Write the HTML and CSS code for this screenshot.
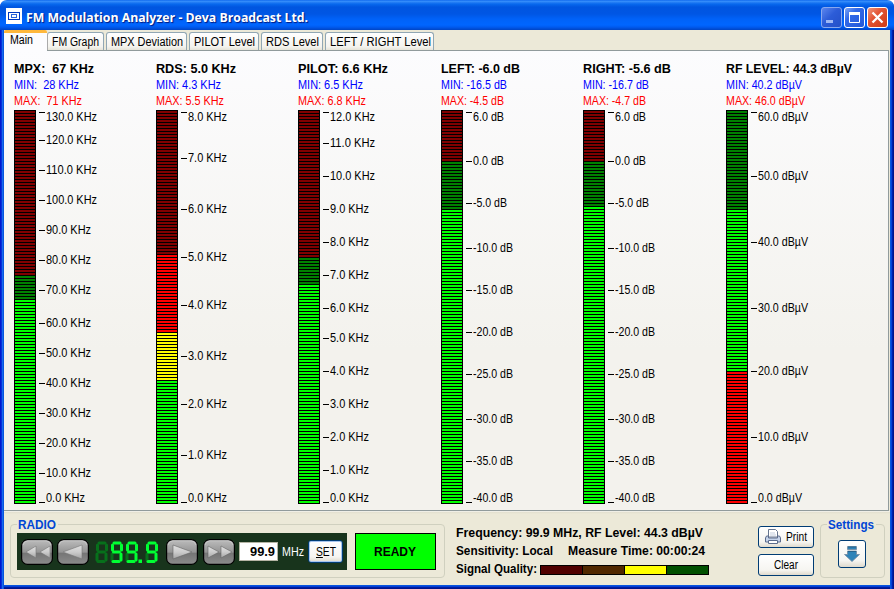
FILE: index.html
```html
<!DOCTYPE html>
<html lang="en">
<head>
<meta charset="utf-8">
<title>FM Modulation Analyzer - Deva Broadcast Ltd.</title>
<link rel="stylesheet" href="styles.css">
</head>
<body>
<div class="window">
  <header class="titlebar">
    <svg class="app-icon" width="16" height="16" viewBox="0 0 16 16" shape-rendering="crispEdges"><rect width="16" height="16" fill="#fff"/><rect x="2.500" y="4.500" width="11" height="7" fill="#fff" stroke="#0038c0"/><rect x="5" y="6" width="6" height="4" fill="#2a62d8"/><rect x="6" y="7" width="4" height="2" fill="#fff"/></svg>
    <h1 class="title"><span data-w="282">FM Modulation Analyzer - Deva Broadcast Ltd.</span></h1>
    <div class="controls">
      <svg class="ctl ctl-min" viewBox="1 1 19 19"><rect x="5" y="13" width="7" height="3" fill="#9eb8f5"/></svg>
      <svg class="ctl ctl-max" viewBox="1 1 19 19"><path d="M5.500 5.500h10v10h-10z" fill="none" stroke="#fff"/><path d="M5 5h11v3H5z" fill="#fff"/></svg>
      <svg class="ctl ctl-close" viewBox="1 1 19 19"><path d="M5.500 5.500l10 10M15.500 5.500l-10 10" stroke="#fff" stroke-width="2.300"/></svg>
    </div>
  </header>
  <nav class="tabs">
    <span class="tab active"><span data-w="23">Main</span></span>
    <span class="tab t-graph"><span data-w="47">FM Graph</span></span>
    <span class="tab t-dev"><span data-w="72">MPX Deviation</span></span>
    <span class="tab t-pilot"><span data-w="61">PILOT Level</span></span>
    <span class="tab t-rds"><span data-w="53">RDS Level</span></span>
    <span class="tab t-lr"><span data-w="101">LEFT / RIGHT Level</span></span>
  </nav>
  <main class="meters" id="meters"></main>
  <footer class="bottom">
    <section class="group radio">
      <span class="legend"><span data-w="38">RADIO</span></span>
      <div class="tuner">
        <svg class="tune" viewBox="0 0 32 26"><use href="#key"/><path d="M15 7L5 13l10 6zM29 7l-10 6 10 6z" fill="url(#arrow)" stroke="#777" stroke-width=".6"/></svg>
        <svg class="tune k2" viewBox="0 0 32 26"><use href="#key"/><path d="M25 6L6 13l19 7z" fill="url(#arrow)" stroke="#777" stroke-width=".6"/></svg>
        <svg class="lcd" viewBox="0 0 64 24" role="img" aria-label="99.9">
          <g fill="none" stroke-width="3" stroke-linecap="round" id="digits"></g>
          <rect x="44.500" y="19.500" width="3.500" height="3.500" fill="#0f3"/>
        </svg>
        <svg class="tune k3" viewBox="0 0 32 26"><use href="#key"/><path d="M7 6l19 7-19 7z" fill="url(#arrow)" stroke="#666" stroke-width=".6"/></svg>
        <svg class="tune k4" viewBox="0 0 32 26"><use href="#key"/><path d="M5 7l11 6-11 6zM18 7l11 6-11 6z" fill="url(#arrow)" stroke="#666" stroke-width=".6"/></svg>
        <span class="freq"><span data-w="25">99.9</span></span>
        <span class="mhz"><span data-w="22">MHz</span></span>
        <button class="btn set"><span data-w="20"><u>S</u>ET</span></button>
      </div>
      <div class="ready"><span data-w="42">READY</span></div>
    </section>
    <section class="status">
      <div><span data-w="247">Frequency: 99.9 MHz, RF Level: 44.3 dBµV</span></div>
      <div class="pair"><span data-w="97">Sensitivity: Local</span><span data-w="137">Measure Time: 00:00:24</span></div>
      <div class="quality"><span data-w="81">Signal Quality:</span><div class="qbar"><i class="q1"></i><i class="q2"></i><i class="q3"></i><i class="q4"></i></div></div>
    </section>
    <div class="actions">
      <button class="btn"><svg width="16" height="16" viewBox="0 0 16 16"><path d="M3.500 8V.5h7l2 2V8z" fill="#fff" stroke="#66758f"/><path d="M5 4h5M5 6h6" stroke="#c3cddd"/><path d="M1.500 7h2v2h9V7h2l1 2v4h-15V9z" fill="#c6d4eb" stroke="#5c6c8c"/><path d="M3.500 11.500h9v3h-9z" fill="#fff" stroke="#5c6c8c"/></svg><span data-w="21">Print</span></button>
      <button class="btn"><span data-w="24">Clear</span></button>
    </div>
    <section class="group settings">
      <span class="legend"><span data-w="46">Settings</span></span>
      <button class="btn down"><svg width="18" height="18" viewBox="0 0 18 18"><path d="M4.500 1.500h9v3h-9zM4.500 6h9v3.500h3L9 16.500 1.500 9.500h3z" fill="#2f83b8" stroke="#7188a0" stroke-width=".8"/><path d="M5 2h8M5 6.500h8" stroke="#27648e"/></svg></button>
    </section>
  </footer>
</div>
<svg class="defs" width="0" height="0"><defs>
  <linearGradient id="face" x1="0" y1="0" x2="0" y2="1"><stop offset="0" stop-color="#bdbdbd"/><stop offset=".5" stop-color="#959595"/><stop offset=".56" stop-color="#767676"/><stop offset="1" stop-color="#8c8c8c"/></linearGradient>
  <linearGradient id="arrow" x1="0" y1="0" x2="0" y2="1"><stop offset="0" stop-color="#e0e0e0"/><stop offset=".5" stop-color="#ccc"/><stop offset="1" stop-color="#a4a4a4"/></linearGradient>
  <g id="key"><rect x=".6" y=".6" width="30.800" height="24.800" rx="6" fill="url(#face)" stroke="#000" stroke-width="1.200"/><path d="M2 6q1-4 5-4.200h18q4 .2 5 4.200" fill="none" stroke="#ccc" stroke-width=".8"/></g>
</defs></svg>
<script src="meters.js"></script>
</body>
</html>
```
FILE: styles.css
```css
* { box-sizing: border-box; }
body { margin: 0; width: 894px; height: 589px; overflow: hidden; background: #fff; font: 12px/16px "Liberation Sans", Arial, sans-serif; color: #000; }
.window { width: 894px; height: 589px; padding: 0 4px 4px; display: flex; flex-direction: column; border-radius: 7px 7px 0 0; overflow: hidden; background: linear-gradient(90deg, #0019cf 0 1px, #0831d9 1px 2px, #166aee 2px 3px, #0855dd 3px 4px, transparent 4px 890px, #0855dd 890px 891px, #0441d8 891px 892px, #0020a8 892px 893px, #00138c 893px), linear-gradient(0deg, #00138c 0 1px, #001da0 1px 2px, #0440d8 2px 3px, #0855dd 3px 4px, #ece9d8 4px); }
.titlebar { flex: none; height: 30px; margin: 0 -4px; padding: 2px 6px 0; display: flex; align-items: center; background: linear-gradient(180deg, #0058e6 0, #3b94ff 1px, #2a82f5 2px, #0869ee 4px, #0055e0 7px, #0056e4 14px, #0062f8 19px, #0066ff 25px, #005bf0 27px, #0044c4 30px); }
.title { margin: 0 0 0 4px; font: bold 13px/18px "Open Sans", "Liberation Sans", sans-serif; color: #fff; text-shadow: 1px 1px 1px #001a80; padding-top: 2px; }
[data-w] { display: inline-block; white-space: pre; transform-origin: 0 50%; text-align: left; }
.controls { margin-left: auto; display: flex; gap: 2px; padding-top: 2px; }
.ctl { width: 21px; height: 21px; border: 1px solid #fff; border-radius: 3px; background: linear-gradient(135deg, #7ea6f5, #3269e8 35%, #2358d8); }
.ctl-min { border-color: #88a8ee; background: linear-gradient(135deg, #5b86ee, #2c5cd8 45%, #2450c8); }
.ctl-close { background: linear-gradient(135deg, #f0967c, #e35535 40%, #cf3a14); }
.tabs { flex: none; height: 20px; display: flex; align-items: flex-end; background: #ece9d8; }
.tab { height: 18px; margin-right: 2px; border: 1px solid #91a7b4; border-bottom: 0; border-radius: 3px 3px 0 0; background: linear-gradient(#fff, #f4f3ee 80%, #e6e4d8); line-height: 18px; padding-left: 4px; }
.active { width: 43px; height: 21px; margin: 0 0 -1px; padding: 0 0 0 6px; border: 0; border-top: 3px solid #ffb83c; border-radius: 2px 2px 0 0; background: #fcfcfe; line-height: 15px; position: relative; z-index: 1; }
.t-graph { width: 57px; border-left-color: #aaa; }
.t-dev { width: 81px; }
.t-pilot { width: 70px; }
.t-rds { width: 62px; }
.t-lr { width: 109px; }
.meters { flex: none; width: 885px; height: 461px; padding: 10px 0 0 10px; border: 1px solid #919b9c; border-left: 0; display: grid; grid-template-columns: 142px 142px 143px 142px 143px 150px; background: linear-gradient(#fcfcfe, #f3f2ed 65%, #f3f2ed); }
.meter-title { height: 16px; font-weight: bold; }
.min { color: #00f; height: 16px; }
.max { color: #f00; height: 16px; }
.gauge { display: flex; margin-top: 1px; height: 394px; }
.bar { width: 22px; height: 394px; border: 1px solid #000; border-width: 0 1px; background: repeating-linear-gradient(180deg, #000 0 1px, transparent 1px 3px), var(--zones); }
.scale { display: flex; flex-direction: column; margin-left: 3px; }
.tick { display: flex; height: 14px; line-height: 14px; align-items: center; }
.mark { width: 6px; height: 1px; background: #000; margin-right: 1px; }
.tick:first-child .mark { margin-top: -9px; }
.tick:last-child .mark { margin-top: 9px; }
.bottom { flex: none; height: 74px; display: flex; background: linear-gradient(#fff 0, #e2dfce 1px, #ece9d8 3px); }
.group { position: relative; border: 1px solid #d0d0bf; border-radius: 4px; }
.legend { position: absolute; top: -8px; left: 6px; padding: 0 2px 0 1px; background: #ece9d8; color: #0046d5; font-weight: bold; line-height: 16px; }
.radio { width: 435px; height: 54px; margin: 13px 0 0 6px; padding: 8px 0 0 6px; display: flex; }
.tuner { width: 330px; height: 37px; background: #18341c; display: flex; align-items: center; padding: 0 4px; }
.tune { width: 32px; height: 26px; flex: none; margin-top: 1px; }
.k2 { margin-left: 4px; }
.lcd { width: 64px; height: 24px; margin: 0 8px 0 5px; flex: none; }
.k4 { margin-left: 5px; }
.freq { width: 39px; height: 19px; margin-left: 4px; padding-left: 10px; flex: none; border: 1px solid #b5b5a5; background: #fff; font-weight: bold; line-height: 18px; }
.mhz { color: #fff; margin-left: 4px; width: 23px; flex: none; }
.btn { height: 22px; padding: 0; display: flex; align-items: center; justify-content: center; gap: 5px; border: 1px solid #003c74; border-radius: 3px; background: linear-gradient(#fff, #f6f5f1 75%, #dfdacd); font: inherit; color: #000; }
.set { width: 35px; height: 23px; margin-left: 3px; flex: none; box-shadow: inset 0 0 0 1px #a6c5ef; }
.ready { width: 81px; height: 37px; margin-left: 8px; padding-right: 2px; border: 1px solid #000; background: #0f0; display: flex; align-items: center; justify-content: center; font-weight: bold; }
.status { margin: 13px 0 0 11px; width: 254px; font-weight: bold; line-height: 18px; flex: none; }
.status > div { height: 18px; display: flex; }
.status .pair { gap: 15px; }
.status .quality { gap: 3px; }
.qbar { width: 169px; height: 10px; margin-top: 5px; border: 1px solid #000; display: flex; gap: 1px; background: #000; }
.qbar i { flex: 1; }
.q1 { background: #500000; }
.q2 { background: #502800; }
.q3 { background: #ff0; }
.q4 { background: #005000; }
.actions { width: 56px; margin: 15px 0 0 48px; display: flex; flex-direction: column; gap: 6px; flex: none; }
.actions .btn { width: 56px; }
.settings { width: 65px; height: 54px; margin: 13px 0 0 6px; flex: none; }
.settings .legend { left: 6px; }
.down { width: 28px; height: 28px; margin: 15px 0 0 17px; }
.defs { position: absolute; }
```
FILE: meters.js
```js
const DR = '#800000', DG = '#008000', G = '#00ff00', R = '#ff0000', Y = '#ffff00';
// zones: [colour, end offset]; marks: text centre offsets from the top of the bar
const meters = [
  { t: ['MPX:  67 KHz', 80], min: ['MIN:  28 KHz', 65], max: ['MAX:  71 KHz', 68], unit: 'KHz', zones: [[DR,165],[DG,189],[G,394]],
    v: [130,120,110,100,90,80,70,60,50,40,30,20,10,0], y: [7,30,60,90,120,150,180,213,243,273,303,333,363,388] },
  { t: ['RDS: 5.0 KHz', 80], min: ['MIN: 4.3 KHz', 65], max: ['MAX: 5.5 KHz', 68], unit: 'KHz', zones: [[DR,144],[R,222],[Y,270],[G,394]],
    v: [8,7,6,5,4,3,2,1,0], y: [7,48,99,147,195,246,294,345,388] },
  { t: ['PILOT: 6.6 KHz', 90], min: ['MIN: 6.5 KHz', 65], max: ['MAX: 6.8 KHz', 68], unit: 'KHz', zones: [[DR,147],[DG,174],[G,394]],
    v: [12,11,10,9,8,7,6,5,4,3,2,1,0], y: [7,33,66,99,132,165,198,228,261,294,327,360,388] },
  { t: ['LEFT: -6.0 dB', 79], min: ['MIN: -16.5 dB', 66], max: ['MAX: -4.5 dB', 63], unit: 'dB', zones: [[DR,51],[DG,99],[G,394]],
    v: [6,0,-5,-10,-15,-20,-25,-30,-35,-40], y: [7,51,93,138,180,222,264,309,351,388] },
  { t: ['RIGHT: -5.6 dB', 88], min: ['MIN: -16.7 dB', 66], max: ['MAX: -4.7 dB', 63], unit: 'dB', zones: [[DR,51],[DG,96],[G,394]],
    v: [6,0,-5,-10,-15,-20,-25,-30,-35,-40], y: [7,51,93,138,180,222,264,309,351,388] },
  { t: ['RF LEVEL: 44.3 dBµV', 126], min: ['MIN: 40.2 dBµV', 76], max: ['MAX: 46.0 dBµV', 79], unit: 'dBµV', zones: [[DG,99],[G,261],[R,394]],
    v: [60,50,40,30,20,10,0], y: [7,66,132,198,261,327,388] }
];
const labelWidth = (text, unit) => {
  const n = text.replace(/[.-]/g, '').length;
  const base = { KHz: 21, dB: 13, 'dBµV': 26 }[unit];
  return base + 3 + n * 6 + 3 + (text[0] === '-' ? 3 : 0);
};
document.getElementById('meters').innerHTML = meters.map(m => {
  let start = 0, prev = 0;
  const zones = m.zones.map(([c, end]) => { const s = `${c} ${start}px ${end}px`; start = end; return s; }).join(',');
  const ticks = m.v.map((v, i) => {
    const top = m.y[i] - 7, gap = top - prev, s = v.toFixed(1);
    prev = top + 14;
    return `<div class="tick" style="margin-top:${gap}px"><i class="mark"></i><span data-w="${labelWidth(s, m.unit)}">${s} ${m.unit}</span></div>`;
  }).join('');
  return `<section class="meter"><div class="meter-title"><span data-w="${m.t[1]}">${m.t[0]}</span></div><div class="min"><span data-w="${m.min[1]}">${m.min[0]}</span></div><div class="max"><span data-w="${m.max[1]}">${m.max[0]}</span></div><div class="gauge"><div class="bar" style="--zones:linear-gradient(180deg,${zones})"></div><div class="scale">${ticks}</div></div></section>`;
}).join('');

// seven-segment display: top, upper left, upper right, middle, lower left, lower right, bottom
const seg = ['M5 3h6','M3.500 5v5','M12.500 5v5','M4.500 12h6','M3 14v6','M12 14v6','M4 21.500h6'];
const lit = k => k !== 4;
document.getElementById('digits').innerHTML = [' ', '9', '9', '9'].map((d, i) =>
  `<g transform="translate(${[0,15,30,50][i]} 0)">` +
  seg.map((p, k) => ({ p, on: d === '9' && lit(k) })).sort((a, b) => a.on - b.on).map(s =>
    `<path d="${s.p}" stroke="${s.on ? '#00ff33' : '#07701b'}"/>`).join('') + '</g>').join('');

// give every label its nominal width
document.querySelectorAll('[data-w]').forEach(el => {
  const want = +el.dataset.w, natural = el.getBoundingClientRect().width;
  el.style.width = want + 'px';
  el.style.transform = `scaleX(${want / natural})`;
});
```
